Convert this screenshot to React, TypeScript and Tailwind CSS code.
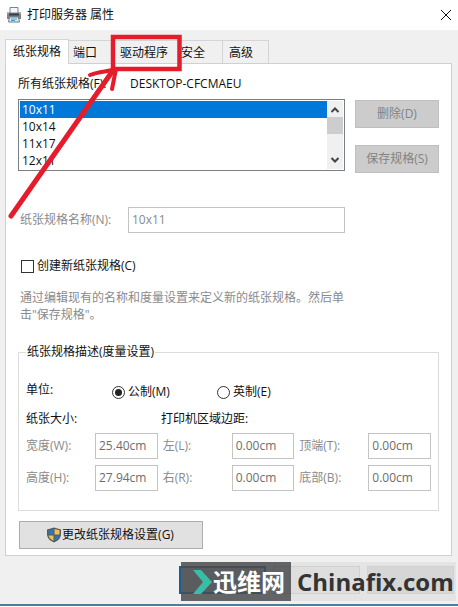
import type { ReactNode } from 'react';

const tabs = [
  { name: '端口', style: 'w-[43px] pl-1' },
  { name: '驱动程序', style: 'w-[69px] pl-2' },
  { name: '安全', style: 'w-[42px]' },
  { name: '高级', style: 'w-[46px] pl-1.5' },
];

const forms = ['10x11', '10x14', '11x17', '12x11'];

const PrinterIcon = () => (
  <svg className="h-4 w-4" viewBox="0 0 16 16" aria-hidden="true">
    <path d="M4 .500h8v6H4z" fill="#f4f6f7" stroke="#7b8388" />
    <path d="M1 5.500h14v6.500H1z" fill="#7d858a" />
    <path d="M1 5h2v2H1zM13 5h2v2h-2z" fill="#a4abaf" />
    <path d="M3 6.500h10v2H3z" fill="#363d42" />
    <path d="M3.500 10h9l1 5h-11z" fill="#dcebf2" stroke="#737b80" />
    <path d="M5 12h6M5 13.500h4" stroke="#4a9cc4" />
  </svg>
);

const ShieldIcon = () => (
  <svg className="h-4 w-4" viewBox="0 0 16 16" aria-hidden="true">
    <path d="M8 .5 15 2.500V7C15 11 12 14 8 15.500 4 14 1 11 1 7V2.500z" fill="#545b61" />
    <path d="M7.500 2 2.500 3.300V7.500H7.500z" fill="#2f78b8" />
    <path d="M8.500 2 13.500 3.300V7.500H8.500z" fill="#f3c04b" />
    <path d="M2.500 8.500H7.500V14C5 12.500 3 11 2.500 8.500z" fill="#f3c04b" />
    <path d="M13.500 8.500H8.500V14C11 12.500 13 11 13.500 8.500z" fill="#2f78b8" />
  </svg>
);

const Chevron = ({ d }: { d: string }) => (
  <svg className="h-4 w-4" viewBox="0 0 16 16" fill="none" stroke="#444" strokeWidth="2" aria-hidden="true">
    <path d={d} />
  </svg>
);

const DisabledButton = ({ children }: { children: ReactNode }) => (
  <button disabled className="h-7 w-full border border-[#bfbfbf] bg-[#cccccc] text-[#838383]">
    {children}
  </button>
);

const Measure = ({ id, label, value }: { id: string; label: string; value: string }) => (
  <>
    <label htmlFor={id} className="text-[#8a8a8a]">
      {label}
    </label>
    <input
      id={id}
      disabled
      defaultValue={value}
      className="h-[26px] w-full min-w-0 border border-[#c4c4c4] bg-white px-[3px] pb-0.5 text-[#6d6d6d]"
    />
  </>
);

const Annotation = () => (
  <svg
    className="pointer-events-none absolute top-0 left-0 h-[230px] w-[200px]"
    viewBox="0 0 200 230"
    fill="none"
    stroke="#e51c2b"
    aria-hidden="true"
  >
    <path d="M113 37H179.500V69H113z" strokeWidth="4.500" />
    <path d="M11 216 114 69" strokeWidth="5" strokeLinecap="round" />
    <path d="M90 75C99 71 107 72 116 69L112 89" strokeWidth="4" strokeLinecap="round" strokeLinejoin="round" />
  </svg>
);

const Watermark = () => (
  <div className="absolute top-1.5 right-0.5 flex h-[39px] w-[275px] items-center whitespace-nowrap font-bold">
    <div className="flex h-full w-[110px] shrink-0 items-center bg-[#4a4b4e]/85 pl-2.5 text-2xl text-white">
      <svg className="h-6 w-[22px] shrink-0" viewBox="0 0 22 24" aria-hidden="true">
        <path d="M2 0h8l11 12L10 24H2l10-12z" fill="#38bda9" />
      </svg>
      <span>迅维网</span>
    </div>
    <div className="flex h-full flex-1 items-center bg-[#dcdcdc]/60 pl-1.5 text-2xl text-[#333]">Chinafix.com</div>
  </div>
);

export default function App() {
  return (
    <div className="relative bg-[#f0f0f0] font-['Open_Sans','Noto_Sans_CJK_SC',sans-serif] text-xs leading-4 text-[#111]">
      <header className="flex h-[30px] items-center bg-white px-1.5">
        <PrinterIcon />
        <h1 className="ml-[5px]">打印服务器 属性</h1>
        <button aria-label="关闭" className="ml-auto">
          <svg className="h-3 w-3" viewBox="0 0 12 12" stroke="#111" aria-hidden="true">
            <path d="M1 1 11 11M11 1 1 11" />
          </svg>
        </button>
      </header>

      <div className="pt-[9px] pr-[6px] pl-[5px]">
        <nav className="flex items-end" role="tablist">
          <button role="tab" aria-selected="true" className="-mb-px h-[25px] w-[64px] border border-b-0 border-[#d4d4d4] bg-white pl-[7px] text-left">
            纸张规格
          </button>
          {tabs.map((tab) => (
            <button
              key={tab.name}
              role="tab"
              aria-selected="false"
              className={`h-[23px] border border-b-0 border-l-0 border-[#d4d4d4] pt-0.5 text-left ${tab.style}`}
            >
              {tab.name}
            </button>
          ))}
        </nav>

        <main className="border border-[#d0d0d0] bg-white px-3 pt-3 pb-1.5">
          <div className="flex">
            <span id="forms" className="w-28">
              所有纸张规格(F):
            </span>
            <span>DESKTOP-CFCMAEU</span>
          </div>

          <div className="mt-[7px] flex gap-2.5">
            <div className="flex h-[72px] flex-1 border border-[#7a7f85] p-px">
              <ul role="listbox" aria-labelledby="forms" className="flex-1 leading-[17px]">
                {forms.map((form, i) => (
                  <li
                    key={form}
                    role="option"
                    aria-selected={i === 0}
                    className={i === 0 ? 'h-[17px] bg-[#0078d7] px-0.5 text-white' : 'h-[17px] px-0.5'}
                  >
                    {form}
                  </li>
                ))}
              </ul>
              <div className="flex w-4 flex-col bg-[#f0f0f0]">
                <Chevron d="M4.500 11 8 7.500 11.500 11" />
                <div className="h-[17px] bg-[#cdcdcd]" />
                <div className="flex-1" />
                <Chevron d="M4.500 5 8 8.500 11.500 5" />
              </div>
            </div>
            <div className="flex w-[84px] flex-col gap-[17px] pt-px">
              <DisabledButton>删除(D)</DisabledButton>
              <DisabledButton>保存规格(S)</DisabledButton>
            </div>
          </div>

          <div className="mt-[34px] mr-[94px] flex items-center text-[#8a8a8a]">
            <label htmlFor="name" className="w-[110px] pl-0.5">
              纸张规格名称(N):
            </label>
            <input id="name" disabled defaultValue="10x11" className="h-[26px] min-w-0 flex-1 border border-[#c4c4c4] bg-white px-[3px] pb-0.5" />
          </div>

          <label className="mt-[25px] flex items-center gap-[3px] pl-[3px]">
            <input type="checkbox" className="h-[13px] w-[13px] appearance-none border border-[#333] bg-white" />
            创建新纸张规格(C)
          </label>

          <p className="mt-[15px] mr-[90px] pl-0.5 leading-[17px] text-[#8a8a8a]">
            通过编辑现有的名称和度量设置来定义新的纸张规格。然后单击"保存规格"。
          </p>

          <fieldset className="mt-[21px] border border-[#dcdcdc] px-[7px] pb-[19px]">
            <legend className="px-px">纸张规格描述(度量设置)</legend>
            <div className="mt-[22px] flex">
              <span className="w-[86px]">单位:</span>
              <label className="flex w-[105px] items-center gap-[3px] pt-0.5">
                <input
                  type="radio"
                  name="unit"
                  defaultChecked
                  className="h-[13px] w-[13px] appearance-none rounded-full border border-[#333] bg-white checked:bg-[#222] checked:bg-clip-content checked:p-0.5"
                />
                公制(M)
              </label>
              <label className="flex items-center gap-[3px] pt-0.5">
                <input type="radio" name="unit" className="h-[13px] w-[13px] appearance-none rounded-full border border-[#333] bg-white" />
                英制(E)
              </label>
            </div>
            <div className="mt-[11px] flex">
              <span className="w-[135px]">纸张大小:</span>
              <span>打印机区域边距:</span>
            </div>
            <div className="mt-1.5 grid grid-cols-[64px_1fr_64px_1fr_64px_1fr] items-center gap-x-[5px] gap-y-1.5">
              <Measure id="width" label="宽度(W):" value="25.40cm" />
              <Measure id="left" label="左(L):" value="0.00cm" />
              <Measure id="top" label="顶端(T):" value="0.00cm" />
              <Measure id="height" label="高度(H):" value="27.94cm" />
              <Measure id="right" label="右(R):" value="0.00cm" />
              <Measure id="bottom" label="底部(B):" value="0.00cm" />
            </div>
          </fieldset>

          <button className="mt-2.5 ml-px flex h-7 w-[184px] items-center justify-center border border-[#adadad] bg-[#e1e1e1] pr-0.5">
            <ShieldIcon />
            更改纸张规格设置(G)
          </button>
        </main>
      </div>

      <footer className="relative flex justify-end gap-[7px] border-b-2 border-[#4b7d9c] pt-[10px] pr-1 pb-2.5">
        <button aria-label="确定" className="h-7 w-[87px] border-2 border-[#1d5f8c] bg-[#b5bdc3]" />
        <button aria-label="取消" className="h-7 w-[87px] border border-[#c0c0c0] bg-[#e1e1e1]" />
        <button aria-label="应用(A)" disabled className="h-7 w-[87px] border border-[#c0c0c0] bg-[#cccccc]" />
        <Watermark />
      </footer>
      <Annotation />
    </div>
  );
}
